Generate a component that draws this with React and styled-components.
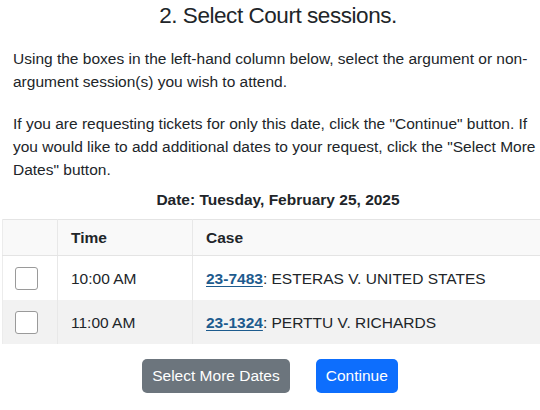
import React from 'react';
import styled, { createGlobalStyle } from 'styled-components';

const sessions = [
  { time: '10:00 AM', docket: '23-7483', title: 'ESTERAS V. UNITED STATES' },
  { time: '11:00 AM', docket: '23-1324', title: 'PERTTU V. RICHARDS' },
];

const GlobalStyle = createGlobalStyle`
  html, body {
    margin: 0;
    padding: 0;
    background: #ffffff;
    overflow: hidden;
  }
  body {
    font-family: "Liberation Sans", Arial, sans-serif;
    color: #212529;
  }
`;

const App = () => (
  <>
    <GlobalStyle />
    <Page>
      <Title>2. Select Court sessions.</Title>
      <Intro>
        Using the boxes in the left-hand column below, select the argument or non-argument session(s) you wish to attend.
      </Intro>
      <Intro>
        If you are requesting tickets for only this date, click the &quot;Continue&quot; button. If you would like to add additional dates to your request, click the &quot;Select More Dates&quot; button.
      </Intro>
      <DateLine>Date: Tuesday, February 25, 2025</DateLine>
      <SessionTable>
        <thead>
          <tr>
            <CheckHead />
            <TimeHead>Time</TimeHead>
            <Head>Case</Head>
          </tr>
        </thead>
        <tbody>
          {sessions.map((s, i) => (
            <Row key={s.docket} striped={i % 2 === 1}>
              <CheckCell>
                <Box type="checkbox" aria-label={`Select ${s.docket}`} />
              </CheckCell>
              <Cell>{s.time}</Cell>
              <Cell>
                <DocketLink href="#">{s.docket}</DocketLink>
                {`: ${s.title}`}
              </Cell>
            </Row>
          ))}
        </tbody>
      </SessionTable>
      <Actions>
        <Button type="button" variant="secondary">Select More Dates</Button>
        <Button type="button" variant="primary">Continue</Button>
      </Actions>
    </Page>
  </>
);

const Page = styled.div`
  width: 556px;
  box-sizing: border-box;
  padding: 0 13px;
  font-size: 15.5px;
  line-height: 23.3px;
`;

const Title = styled.h4`
  margin: 0 0 17px;
  padding-top: 2px;
  text-align: center;
  font-size: 22.5px;
  line-height: 28px;
  font-weight: 400;
  letter-spacing: -0.45px;
`;

const Intro = styled.p`
  margin: 0 0 18px;
`;

const DateLine = styled.h6`
  margin: -10px 0 8px;
  text-align: center;
  font-size: 15.5px;
  line-height: 22px;
  font-weight: 700;
`;

const SessionTable = styled.table`
  margin-left: -11px;
  width: 560px;
  border-collapse: collapse;
  border-top: 1px solid #e4e4e4;
`;

const Head = styled.th`
  height: 35px;
  padding: 0 13px;
  text-align: left;
  font-weight: 700;
  background: #f9f9f9;
  border-bottom: 1px solid #e4e4e4;
  border-left: 1px solid #e8e8e8;
`;

const CheckHead = styled(Head)`
  width: 28px;
  border-left: 1px solid #ececec;
`;

const TimeHead = styled(Head)`
  width: 108px;
`;

const Row = styled.tr`
  background: ${(p) => (p.striped ? '#f2f2f2' : '#ffffff')};
`;

const Cell = styled.td`
  height: 44px;
  padding: 0 13px;
  border-left: 1px solid #e8e8e8;
`;

const CheckCell = styled(Cell)`
  border-left: 1px solid #ececec;
  padding: 0 0 0 12px;
`;

const Box = styled.input`
  appearance: none;
  display: block;
  margin: 0;
  width: 23px;
  height: 23px;
  box-sizing: border-box;
  background: #ffffff;
  border: 1px solid #9a9a9a;
  border-radius: 3px;
`;

const DocketLink = styled.a`
  color: #1d5b8e;
  font-weight: 700;
  text-decoration: underline;
  text-underline-offset: 2px;
`;

const Actions = styled.div`
  display: flex;
  justify-content: center;
  gap: 26px;
  padding: 15px 16px 0 0;
`;

const Button = styled.button`
  height: 34px;
  padding: 0 10px;
  border: none;
  border-radius: 5px;
  font-family: inherit;
  font-size: 15.5px;
  color: #ffffff;
  background: ${(p) => (p.variant === 'primary' ? '#0d6efd' : '#6c757d')};
`;

export default App;
